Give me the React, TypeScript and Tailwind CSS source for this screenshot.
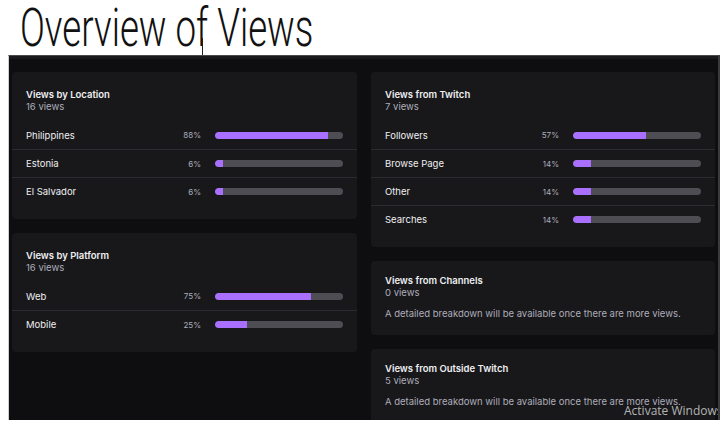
import React from "react";

type Row = { label: string; pct: number };

const Bar = ({ pct }: { pct: number }) => (
  <div className="w-[128px] h-[7px] rounded-full bg-[#4d4d53] overflow-hidden">
    <div className="h-full bg-[#a970ff] rounded-l-full" style={{ width: `${pct}%` }} />
  </div>
);

const StatCard = ({ title, views, rows }: { title: string; views: string; rows: Row[] }) => (
  <div className="bg-[#18181b] rounded-[4px] pb-[14px]">
    <div className="px-[14px] pt-[17px] pb-[8px]">
      <div className="text-[9.5px] leading-[11px] font-semibold text-[#efeff1]">{title}</div>
      <div className="mt-[1px] text-[9.5px] leading-[12px] text-[#adadb8]">{views}</div>
    </div>
    {rows.map((r, i) => (
      <div
        key={r.label}
        className={`h-[28px] px-[14px] flex items-center ${i > 0 ? "border-t border-[#2c2c30]" : ""}`}
      >
        <div className="flex-1 text-[9.5px] leading-[12px] pt-[1px] text-[#efeff1]">{r.label}</div>
        <div className="w-[40px] text-right text-[8px] leading-[12px] text-[#adadb8] mr-[14px]">{r.pct}%</div>
        <Bar pct={r.pct} />
      </div>
    ))}
  </div>
);

const EmptyCard = ({ title, views }: { title: string; views: string }) => (
  <div className="bg-[#18181b] rounded-[4px] px-[14px] pt-[14px] pb-[15px]">
    <div className="text-[9.5px] leading-[11px] font-semibold text-[#efeff1]">{title}</div>
    <div className="mt-[1px] text-[9.5px] leading-[12px] text-[#adadb8]">{views}</div>
    <div className="mt-[9px] text-[9.5px] leading-[12px] text-[#adadb8] whitespace-nowrap">
      A detailed breakdown will be available once there are more views.
    </div>
  </div>
);

export default function App() {
  return (
    <div className="w-[726px] h-[426px] bg-white relative overflow-hidden">
      {/* heading */}
      <div className="h-[55px] pl-[20px]">
        <div
          className="inline-block origin-left scale-x-[0.68] text-[54px] leading-[55px] font-light text-[#111] whitespace-nowrap"
          style={{ fontFamily: "Roboto, sans-serif" }}
        >
          Overview of Views
        </div>
      </div>
      <div className="absolute left-[202px] top-[38px] w-[1px] h-[18px] bg-[#222]" />

      {/* screenshot panel */}
      <div
        className="relative ml-[8px] w-[712px] h-[365px] bg-[#0e0e10] border-l border-r-2 border-t border-l-[#cfcfcf] border-r-[#3a3a3a] border-t-[#4a4a4a] overflow-hidden"
        style={{ fontFamily: "Inter, sans-serif" }}
      >
        <div className="h-[3px] bg-[#1a1a1c]" />
        <div className="flex gap-[14px] pl-[3px] pr-[3px] pt-[13px]">
          <div className="w-[345px] flex flex-col gap-[14px]">
            <StatCard
              title="Views by Location"
              views="16 views"
              rows={[
                { label: "Philippines", pct: 88 },
                { label: "Estonia", pct: 6 },
                { label: "El Salvador", pct: 6 },
              ]}
            />
            <StatCard
              title="Views by Platform"
              views="16 views"
              rows={[
                { label: "Web", pct: 75 },
                { label: "Mobile", pct: 25 },
              ]}
            />
          </div>
          <div className="w-[344px] flex flex-col gap-[14px]">
            <StatCard
              title="Views from Twitch"
              views="7 views"
              rows={[
                { label: "Followers", pct: 57 },
                { label: "Browse Page", pct: 14 },
                { label: "Other", pct: 14 },
                { label: "Searches", pct: 14 },
              ]}
            />
            <EmptyCard title="Views from Channels" views="0 views" />
            <EmptyCard title="Views from Outside Twitch" views="5 views" />
          </div>
        </div>
        <div
          className="absolute left-[615px] top-[348px] text-[12px] leading-[14px] text-[#b4b4b4] whitespace-nowrap"
          style={{ fontFamily: "'Open Sans', sans-serif" }}
        >
          Activate Windows
        </div>
      </div>
    </div>
  );
}
